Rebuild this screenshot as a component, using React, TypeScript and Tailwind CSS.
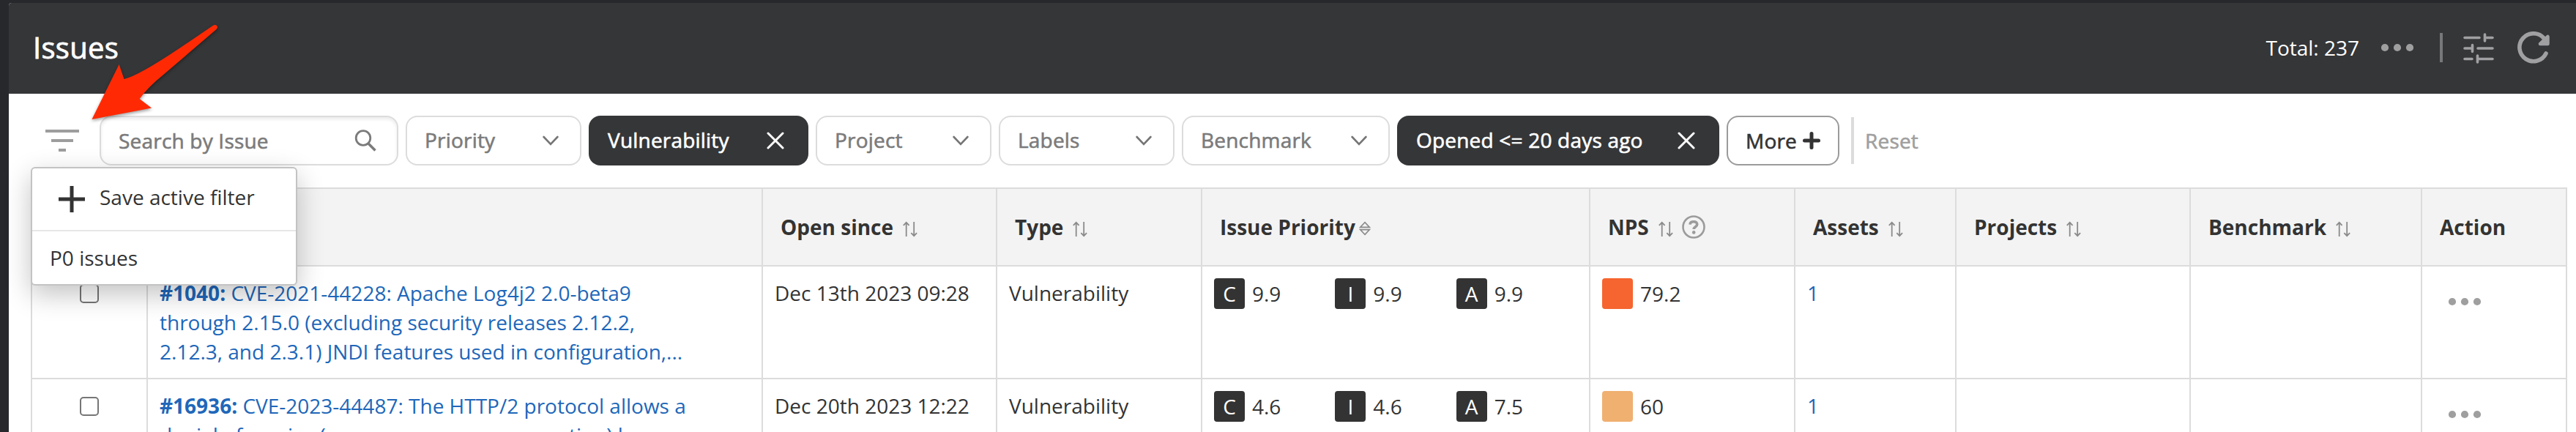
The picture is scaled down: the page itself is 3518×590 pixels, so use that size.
import React from 'react';

const gridCols =
  'grid grid-cols-[158px_840px_320px_280px_530px_280px_220px_320px_316px_198px]';

interface Issue {
  id: string;
  lines: string[];
  openSince: string;
  type: string;
  scores: { label: string; value: string }[];
  nps: string;
  npsColor: string;
  assets: number;
}

const issues: Issue[] = [
  {
    id: '#1040:',
    lines: [
      'CVE-2021-44228: Apache Log4j2 2.0-beta9',
      'through 2.15.0 (excluding security releases 2.12.2,',
      '2.12.3, and 2.3.1) JNDI features used in configuration,...',
    ],
    openSince: 'Dec 13th 2023 09:28',
    type: 'Vulnerability',
    scores: [
      { label: 'C', value: '9.9' },
      { label: 'I', value: '9.9' },
      { label: 'A', value: '9.9' },
    ],
    nps: '79.2',
    npsColor: 'bg-[#f6652f]',
    assets: 1,
  },
  {
    id: '#16936:',
    lines: [
      'CVE-2023-44487: The HTTP/2 protocol allows a',
      'denial of service (server resource consumption) because',
    ],
    openSince: 'Dec 20th 2023 12:22',
    type: 'Vulnerability',
    scores: [
      { label: 'C', value: '4.6' },
      { label: 'I', value: '4.6' },
      { label: 'A', value: '7.5' },
    ],
    nps: '60',
    npsColor: 'bg-[#efb070]',
    assets: 1,
  },
];

// Open Sans has no medium weight here, so the regular one is thickened slightly
const medium = 'tracking-[0.2px] [-webkit-text-stroke:0.6px_currentColor]';

const Dots: React.FC = () => (
  <svg width="44" height="12" viewBox="0 0 44 12" fill="#9f9fa0">
    <circle cx="5" cy="6" r="5.1" />
    <circle cx="22" cy="6" r="5.1" />
    <circle cx="39" cy="6" r="5.1" />
  </svg>
);

const SortIcon: React.FC = () => (
  <svg className="mt-1.5 ml-[13px]" width="20" height="22" viewBox="0 0 20 22" fill="none" stroke="#8a8a8a" strokeWidth="1.8">
    <path d="M4.7 21V1.8M.8 5.8l3.9-4 3.9 4M15.2 1v19.2M11.3 16.2l3.9 4 3.9-4" />
  </svg>
);

const PrioritySortIcon: React.FC = () => (
  <svg className="mt-1 ml-[5px]" width="16" height="20" viewBox="0 0 16 20" fill="none" stroke="#8a8a8a" strokeWidth="1.6">
    <path d="M8 1.6 14.4 8.4H1.6zM8 18.4 14.4 11.6H1.6z" />
  </svg>
);

const HelpIcon: React.FC = () => (
  <svg className="ml-3" width="32" height="32" viewBox="0 0 32 32" fill="none" stroke="#9b9b9b">
    <circle cx="16" cy="16" r="14.5" strokeWidth="2.6" />
    <path d="M11 12.6C11.2 10 13.2 8.800 16 8.800C18.900 8.800 20.700 10.300 20.700 12.600C20.700 15.600 16.200 15.800 16.200 19" strokeWidth="3.6" />
    <circle cx="16.200" cy="23.400" r="2.3" fill="#9b9b9b" stroke="none" />
  </svg>
);

const FilterSelect: React.FC<{ label: string; wide?: boolean }> = ({ label, wide }) => (
  <button
    className={`flex h-[68px] items-center justify-between rounded-2xl border-2 border-[#dcdcdc] bg-white pr-[29px] pl-6 text-[#7b7b7b] ${
      wide ? 'w-[284px]' : 'w-[240px]'
    }`}
  >
    <span className={`pb-0.5 ${medium}`}>{label}</span>
    <svg width="22" height="14" viewBox="0 0 22 14" fill="none" stroke="#757575" strokeWidth="2.6" strokeLinecap="round">
      <path d="M1.600 2 11 11.800 20.400 2" />
    </svg>
  </button>
);

const ActiveFilter: React.FC<{ label: string; wide?: boolean }> = ({ label, wide }) => (
  <button
    className={`flex h-[68px] items-center justify-between rounded-2xl bg-[#353638] pr-[33px] pl-[26px] text-white ${
      wide ? 'w-[440px]' : 'w-[300px]'
    }`}
  >
    <span className={`pb-0.5 ${medium}`}>{label}</span>
    <svg width="24" height="24" viewBox="0 0 24 24" fill="none" stroke="#fff" strokeWidth="3" strokeLinecap="round">
      <path d="M2 2 22 22M22 2 2 22" />
    </svg>
  </button>
);

const HeaderCell: React.FC<{ label?: string; children?: React.ReactNode }> = ({ label, children }) => (
  <div className="flex h-[106px] items-center border-r-2 border-b-2 border-[#dcdcdc] bg-[#f3f3f3] pl-6 font-bold">
    {label && <span>{label}</span>}
    {children}
  </div>
);

const Cell: React.FC<{ children?: React.ReactNode }> = ({ children }) => (
  <div className="h-[154px] border-r-2 border-b-2 border-[#dcdcdc] p-4">{children}</div>
);

const IssueRow: React.FC<{ issue: Issue }> = ({ issue }) => (
  <div className={gridCols}>
    <Cell>
      <div className="mt-2 ml-[49px] size-[26px] rounded-[5px] border-2 border-[#767676] bg-white" />
    </Cell>
    <Cell>
      <div className="text-[#2067b9]">
        {issue.lines.map((line, i) => (
          <div key={line} className="whitespace-nowrap">
            {i === 0 && <span className="font-bold">{issue.id} </span>}
            {line}
          </div>
        ))}
      </div>
    </Cell>
    <Cell>{issue.openSince}</Cell>
    <Cell>{issue.type}</Cell>
    <Cell>
      <div className="flex">
        {issue.scores.map((score) => (
          <div key={score.label} className="flex flex-1 items-center gap-[10px]">
            <span className="flex size-[42px] items-center justify-center rounded bg-[#333] text-white">
              {score.label}
            </span>
            <span>{score.value}</span>
          </div>
        ))}
      </div>
    </Cell>
    <Cell>
      <div className="flex items-center gap-[10px]">
        <span className={`size-[42px] rounded ${issue.npsColor}`} />
        <span>{issue.nps}</span>
      </div>
    </Cell>
    <Cell>
      <span className="text-[#2067b9]">{issue.assets}</span>
    </Cell>
    <Cell />
    <Cell />
    <Cell>
      <div className="pt-[26px] pl-5">
        <Dots />
      </div>
    </Cell>
  </div>
);

const SavedFiltersMenu: React.FC = () => (
  <div className="absolute top-[228px] left-[42px] z-10 h-[162px] w-[364px] rounded-md border-2 border-[#c3c3c3] bg-white shadow-[0_12px_36px_rgba(0,0,0,0.24)]">
    <div className="flex h-[86px] items-center gap-5 border-b-2 border-[#e6e6e6] pl-9">
      <svg width="36" height="36" viewBox="0 0 36 36" stroke="#333" strokeWidth="5">
        <path d="M18 0V36M0 18H36" />
      </svg>
      <span className="pb-[7px]">Save active filter</span>
    </div>
    <div className="flex h-[72px] items-center pl-6">P0 issues</div>
  </div>
);

const Pointer: React.FC = () => (
  <svg
    className="absolute top-[30px] left-[120px] z-20 drop-shadow-[0_2px_2px_rgba(0,0,0,0.4)]"
    width="184"
    height="140"
    viewBox="120 30 184 140"
  >
    <path
      d="M125.500 163 162.600 88 169.500 108Q188 104 245 66L291.500 34.500Q295 33 296.800 36 297.500 38 295 40.500L222 103Q202 119 190.600 135L207 147.500Z"
      fill="#ff2a04"
    />
  </svg>
);

const App: React.FC = () => {
  return (
    <div className="relative h-[590px] w-[3518px] overflow-hidden bg-[#27282c] pt-1 pl-3 font-['Open_Sans',sans-serif] text-[28px] leading-[40px] text-[#333]">
      <div className="h-[586px] overflow-hidden rounded-tl bg-white">
        <header className="flex h-[124px] items-center bg-[#353638] pr-9 pb-0.5 pl-[33px] text-white">
          <h1 className="pb-px text-[40px] tracking-[0.3px] [-webkit-text-stroke:0.8px_currentColor]">Issues</h1>
          <span className="mr-[30px] ml-auto">Total: 237</span>
          <Dots />
          <div className="mr-7 ml-9 h-10 w-1 bg-[#77787a]" />
          <svg className="mt-0.5" width="42" height="42" viewBox="0 0 42 42" fill="none" stroke="#a0a0a2" strokeWidth="3.6" strokeLinecap="round">
            <path d="M2 6.500H22M29.500 2V11M29.500 6.500H40M2 21H12.500M12.500 16.500V25.500M20 21H40M2 35.500H12M19.500 31V40M19.500 35.500H40" />
          </svg>
          <svg className="ml-8" width="44" height="44" viewBox="0 0 44 44" fill="none" stroke="#a0a0a2" strokeLinecap="round" strokeLinejoin="round">
            <path d="M39 30A19 19 0 1 1 36 9" strokeWidth="5.600" />
            <path d="M41.500 7V17H31z" fill="#a0a0a2" strokeWidth="4.500" />
          </svg>
        </header>

        <div className="flex h-[128px] items-center gap-[10px] pl-[50px]">
          <svg className="mr-[18px]" width="46" height="30" viewBox="0 0 46 30" stroke="#9d9d9d" strokeWidth="4">
            <path d="M0 2H46M8 15H38M18 28H28" />
          </svg>
          <div className="flex h-[68px] w-[408px] items-center justify-between rounded-2xl border-2 border-[#dcdcdc] pr-7 pl-6 text-[#7b7b7b] shadow-[inset_0_3px_4px_rgba(0,0,0,0.08)]">
            <span className={medium}>Search by Issue</span>
            <svg width="30" height="30" viewBox="0 0 30 30" fill="none" stroke="#7b7b7b">
              <circle cx="12" cy="11.500" r="9.800" strokeWidth="2.800" />
              <path d="M18.500 18.500 28.500 28.500" strokeWidth="3.600" />
            </svg>
          </div>
          <FilterSelect label="Priority" />
          <ActiveFilter label="Vulnerability" />
          <FilterSelect label="Project" />
          <FilterSelect label="Labels" />
          <FilterSelect label="Benchmark" wide />
          <ActiveFilter label="Opened <= 20 days ago" wide />
          <button className="flex h-[68px] w-[154px] items-center justify-between rounded-2xl border-2 border-[#9b9b9b] pr-6 pl-6">
            <span className={medium}>More</span>
            <svg width="24" height="24" viewBox="0 0 24 24" stroke="#333" strokeWidth="5" strokeLinecap="round">
              <path d="M12 2.500V21.500M2.500 12H21.500" />
            </svg>
          </button>
          <div className="ml-1.5 h-16 w-1 bg-[#dcdcdc]" />
          <span className={`ml-[5px] text-[#9f9f9f] ${medium}`}>Reset</span>
        </div>

        <div className="ml-[30px] w-[3464px] border-t-2 border-l-2 border-[#dcdcdc]">
          <div className={gridCols}>
            <HeaderCell />
            <HeaderCell />
            <HeaderCell label="Open since">
              <SortIcon />
            </HeaderCell>
            <HeaderCell label="Type">
              <SortIcon />
            </HeaderCell>
            <HeaderCell label="Issue Priority">
              <PrioritySortIcon />
            </HeaderCell>
            <HeaderCell label="NPS">
              <SortIcon />
              <HelpIcon />
            </HeaderCell>
            <HeaderCell label="Assets">
              <SortIcon />
            </HeaderCell>
            <HeaderCell label="Projects">
              <SortIcon />
            </HeaderCell>
            <HeaderCell label="Benchmark">
              <SortIcon />
            </HeaderCell>
            <HeaderCell label="Action" />
          </div>
          {issues.map((issue) => (
            <IssueRow key={issue.id} issue={issue} />
          ))}
        </div>
      </div>
      <SavedFiltersMenu />
      <Pointer />
    </div>
  );
};

export default App;
